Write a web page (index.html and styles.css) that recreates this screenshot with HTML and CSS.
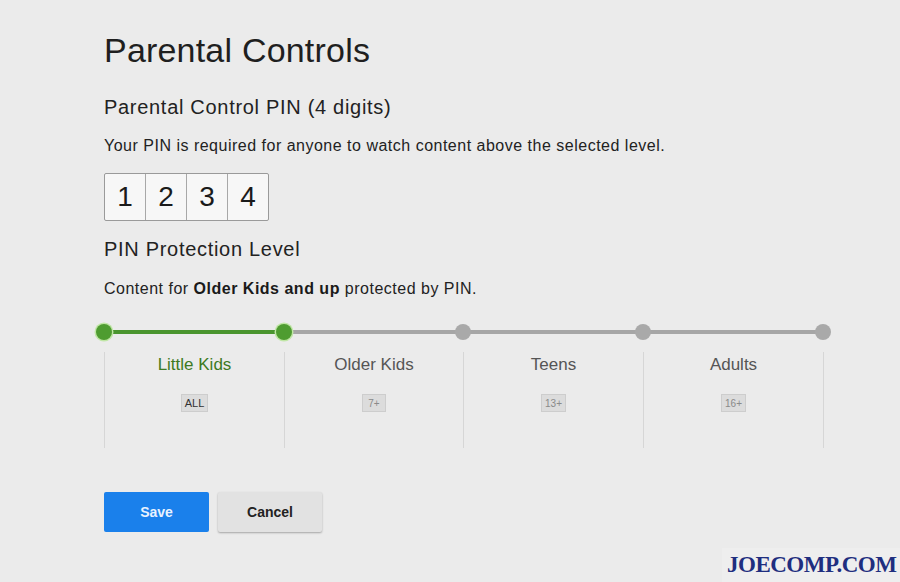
FILE: index.html
```html
<!DOCTYPE html>
<html lang="en">
<head>
<meta charset="utf-8">
<title>Parental Controls</title>
<link rel="stylesheet" href="styles.css">
</head>
<body>
<main class="page">
  <h1 class="title">Parental Controls</h1>
  <h2 class="subhead">Parental Control PIN (4 digits)</h2>
  <p class="text">Your PIN is required for anyone to watch content above the selected level.</p>
  <div class="pin">
    <span class="digit">1</span>
    <span class="digit">2</span>
    <span class="digit">3</span>
    <span class="digit">4</span>
  </div>
  <h2 class="subhead subhead-level">PIN Protection Level</h2>
  <p class="text text-level">Content for <b>Older Kids and up</b> protected by PIN.</p>
  <div class="slider">
    <div class="track">
      <span class="dot dot-1 on"></span>
      <span class="dot dot-2 on"></span>
      <span class="dot dot-3"></span>
      <span class="dot dot-4"></span>
      <span class="dot dot-5"></span>
    </div>
  </div>
  <div class="levels">
    <div class="level">
      <div class="level-name active">Little Kids</div>
      <span class="badge badge-dark">ALL</span>
    </div>
    <div class="level">
      <div class="level-name">Older Kids</div>
      <span class="badge">7+</span>
    </div>
    <div class="level">
      <div class="level-name">Teens</div>
      <span class="badge">13+</span>
    </div>
    <div class="level">
      <div class="level-name">Adults</div>
      <span class="badge">16+</span>
    </div>
  </div>
  <div class="actions">
    <button class="btn btn-save">Save</button>
    <button class="btn btn-cancel">Cancel</button>
  </div>
</main>
<div class="watermark">JOECOMP.COM</div>
</body>
</html>
```

FILE: styles.css
```css
* { box-sizing: border-box; }
html, body {
  margin: 0;
  padding: 0;
  background: #ebebeb;
  width: 900px;
  height: 582px;
  overflow: hidden;
}
body {
  font-family: "Liberation Sans", Arial, sans-serif;
  color: #222;
}
.page {
  padding: 30px 0 0 104px;
}
.title {
  margin: 0;
  font-size: 34px;
  line-height: 40px;
  font-weight: normal;
  letter-spacing: 0.2px;
  color: #1f1f1f;
}
.subhead {
  margin: 25px 0 0;
  font-size: 20px;
  line-height: 24px;
  font-weight: normal;
  letter-spacing: 0.7px;
  color: #222;
}
.subhead-level {
  margin-top: 16px;
}
.text {
  margin: 17px 0 0;
  font-size: 16px;
  line-height: 20px;
  letter-spacing: 0.5px;
  color: #222;
}
.text-level {
  margin-top: 18px;
}
.text b {
  font-weight: bold;
  color: #1a1a1a;
}
.pin {
  display: flex;
  width: 165px;
  height: 48px;
  margin-top: 17px;
  border: 1px solid #9a9a9a;
  border-radius: 2px;
  background: #f7f7f7;
}
.digit {
  flex: 1;
  display: flex;
  align-items: center;
  justify-content: center;
  font-size: 28px;
  color: #1a1a1a;
  border-left: 1px solid #a8a8a8;
}
.digit:first-child { border-left: none; }
.slider {
  margin-top: 25px;
  width: 719px;
  height: 16px;
  display: flex;
  align-items: center;
}
.track {
  position: relative;
  width: 100%;
  height: 4px;
  background: linear-gradient(to right, #4a952f 0, #4a952f 180px, #a6a6a6 180px, #a6a6a6 100%);
}
.dot {
  position: absolute;
  top: 50%;
  width: 16px;
  height: 16px;
  margin: -8px 0 0 -8px;
  border-radius: 50%;
  background: #a9a9a9;
}
.dot.on {
  background: #4e9c30;
  box-shadow: 0 0 0 1.5px #c0e6a6;
}
.dot-1 { left: 0; }
.dot-2 { left: 180px; }
.dot-3 { left: 359px; }
.dot-4 { left: 539px; }
.dot-5 { left: 719px; }
.levels {
  margin-top: 12px;
  display: grid;
  grid-template-columns: 180px 179px 180px 180px;
  width: 720px;
  height: 96px;
  border-right: 1px solid #d6d6d6;
}
.level {
  border-left: 1px solid #d6d6d6;
  display: flex;
  flex-direction: column;
  align-items: center;
  padding-top: 3px;
}
.level-name {
  font-size: 17px;
  line-height: 20px;
  color: #555;
}
.level-name.active {
  color: #3d7a22;
}
.badge {
  margin-top: 19px;
  min-width: 24px;
  height: 18px;
  padding: 0 3px;
  display: flex;
  align-items: center;
  justify-content: center;
  font-size: 10px;
  color: #8a8a8a;
  background: #dcdcdc;
  border: 1px solid #cdcdcd;
}
.badge-dark {
  color: #333;
  font-size: 11px;
}
.actions {
  margin-top: 44px;
  display: flex;
  gap: 9px;
}
.btn {
  width: 105px;
  height: 40px;
  border: none;
  border-radius: 2px;
  font-family: "Liberation Sans", Arial, sans-serif;
  font-size: 14px;
  font-weight: bold;
  cursor: pointer;
}
.btn-save {
  background: #1a80eb;
  color: #e8f2ff;
}
.btn-cancel {
  width: 104px;
  background: #e2e2e2;
  color: #222;
  box-shadow: 0 1px 2px rgba(0,0,0,0.3);
}
.watermark {
  position: absolute;
  right: 0;
  bottom: 0;
  width: 178px;
  height: 34px;
  padding: 5px 0 0 5px;
  background: #eeeeee;
  font-family: "Liberation Serif", "Times New Roman", serif;
  font-weight: bold;
  font-size: 23px;
  line-height: 24px;
  letter-spacing: -0.5px;
  color: #1f2e7f;
}
```
